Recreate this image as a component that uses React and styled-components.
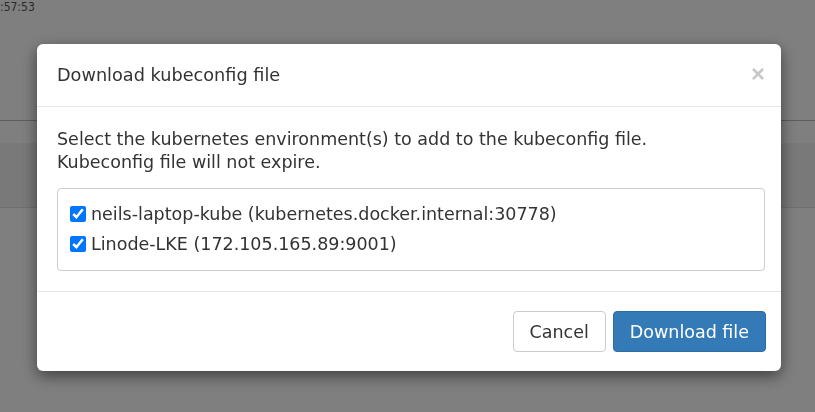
import React from 'react'
import styled, { createGlobalStyle } from 'styled-components'

const Global = createGlobalStyle`
  html, body {
    margin: 0;
    padding: 0;
    background: #fff;
    font-family: "DejaVu Sans", "Open Sans", sans-serif;
    color: #333;
  }
`

const Page = styled.div`
  height: 412px;
  overflow: hidden;
`

const TopBar = styled.div`
  height: 121px;
  border-bottom: 1px solid #bbb;
  box-sizing: border-box;
`

const Clock = styled.div`
  font-family: "DejaVu Sans Condensed", "Liberation Sans Narrow", sans-serif;
  font-size: 12px;
  line-height: 15px;
  color: #555;
`

const Band = styled.div`
  margin-top: 22px;
  height: 64px;
  background: #f2f2f2;
  border-bottom: 1px solid #e0e0e0;
`

const Overlay = styled.div`
  position: fixed;
  inset: 0;
  background: rgba(0, 0, 0, 0.5);
`

const Modal = styled.div`
  width: 744px;
  margin: 44px 0 0 37px;
  background: #fff;
  border-radius: 6px;
  box-shadow: 0 5px 15px rgba(0, 0, 0, 0.5);
`

const Header = styled.div`
  display: flex;
  align-items: center;
  justify-content: space-between;
  padding: 19px 20px;
  border-bottom: 1px solid #e5e5e5;
`

const Title = styled.h4`
  margin: 0;
  font-size: 17.7px;
  font-weight: 400;
  line-height: 24px;
`

const Close = styled.button`
  border: 0;
  background: none;
  padding: 0;
  margin: -2px -4px 0 0;
  color: #c8c8c8;
  font-size: 24px;
  font-weight: 700;
  line-height: 24px;
  font-family: "Liberation Sans", sans-serif;
`

const Body = styled.div`
  padding: 21px 16px 20px 20px;
  font-size: 17.5px;
  line-height: 23px;
`

const Text = styled.p`
  margin: 0 0 14px;
`

const List = styled.div`
  border: 1px solid #ccc;
  border-radius: 4px;
  padding: 10px 12px 11px;
`

const Item = styled.label`
  display: flex;
  align-items: center;
  gap: 5px;
  height: 30px;
`

const Check = styled.input`
  width: 16px;
  height: 16px;
  margin: 0;
`

const Footer = styled.div`
  display: flex;
  justify-content: flex-end;
  gap: 7px;
  padding: 19px 15px 19px 20px;
  border-top: 1px solid #e5e5e5;
`

const Button = styled.button`
  height: 41px;
  padding: 0 16px;
  font-family: inherit;
  font-size: 17.5px;
  border-radius: 4px;
  border: 1px solid ${p => (p.$primary ? '#2e6da4' : '#ccc')};
  background: ${p => (p.$primary ? '#337ab7' : '#fff')};
  color: ${p => (p.$primary ? '#fff' : '#333')};
`

const environments = [
  'neils-laptop-kube (kubernetes.docker.internal:30778)',
  'Linode-LKE (172.105.165.89:9001)',
]

export default function App() {
  return (
    <Page>
      <Global />
      <TopBar>
        <Clock>:57:53</Clock>
      </TopBar>
      <Band />
      <Overlay>
        <Modal>
          <Header>
            <Title>Download kubeconfig file</Title>
            <Close>×</Close>
          </Header>
          <Body>
            <Text>
              Select the kubernetes environment(s) to add to the kubeconfig file.
              <br />
              Kubeconfig file will not expire.
            </Text>
            <List>
              {environments.map(env => (
                <Item key={env}>
                  <Check type="checkbox" defaultChecked />
                  {env}
                </Item>
              ))}
            </List>
          </Body>
          <Footer>
            <Button>Cancel</Button>
            <Button $primary>Download file</Button>
          </Footer>
        </Modal>
      </Overlay>
    </Page>
  )
}
